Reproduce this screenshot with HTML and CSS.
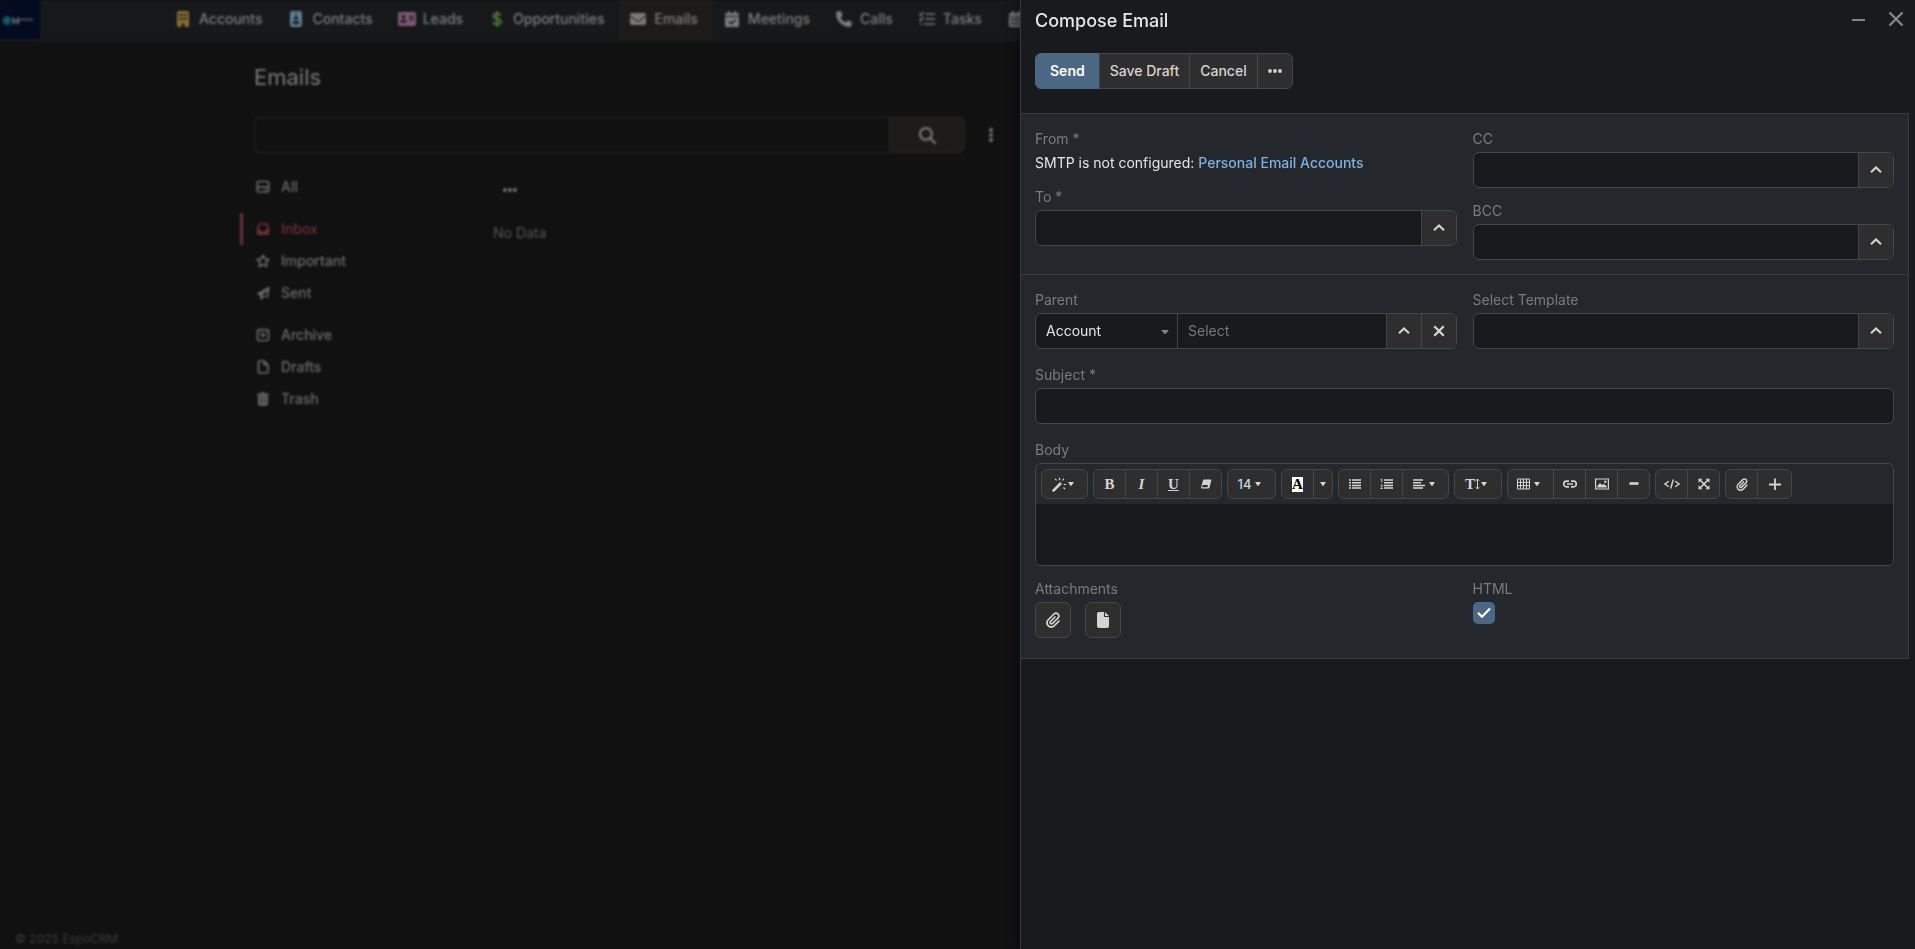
FILE: index.html
```html
<!DOCTYPE html>
<html lang="en">

<head>
  <meta charset="UTF-8" />
  <meta name="viewport" content="width=device-width, initial-scale=1" />
  <title>EspoCRM</title>
  <link rel="stylesheet" href="styles.css">
</head>

<body>

  <!-- Shared icons -->
  <svg class="sprite" aria-hidden="true">
    <symbol id="i-up" viewBox="0 0 14 14"><path d="M2 9.300 7 4.500l5 4.800" fill="none" stroke="currentColor" stroke-width="2.100" /></symbol>
    <symbol id="i-caret" viewBox="0 0 8 4" preserveAspectRatio="none"><path d="M1 0h6q1 0 .4.8L4.600 3.700q-.6.500-1.200 0L.6.800Q0 0 1 0z" /></symbol>
    <symbol id="i-dots" viewBox="0 0 14 4"><circle cx="2" cy="2" r="1.900" /><circle cx="7" cy="2" r="1.900" /><circle cx="12" cy="2" r="1.900" /></symbol>
    <symbol id="i-clip" viewBox="0 0 448 512"><path d="M364.200 83.800c-24.400-24.400-64-24.400-88.400 0l-184 184c-42.100 42.100-42.100 110.300 0 152.400s110.300 42.100 152.400 0l152-152c10.900-10.900 28.700-10.900 39.600 0s10.900 28.700 0 39.600l-152 152c-64 64-167.600 64-231.600 0s-64-167.600 0-231.600l184-184c46.300-46.300 121.300-46.300 167.600 0s46.300 121.300 0 167.600l-176 176c-28.600 28.600-75 28.600-103.600 0s-28.600-75 0-103.600l144-144c10.900-10.900 28.700-10.900 39.600 0s10.900 28.700 0 39.600l-144 144c-6.700 6.700-6.700 17.700 0 24.400s17.700 6.700 24.400 0l176-176c24.400-24.400 24.400-64 0-88.400z" /></symbol>
  </svg>

  <div class="page">
    <header class="navbar">
      <a class="logo" href="#" aria-label="Home">
        <svg width="40" height="39" viewBox="0 0 40 39">
          <circle cx="7" cy="20.500" r="4.500" fill="#10485c" />
          <path d="M3 20.500h8M7 16.500v8" stroke="#165c70" stroke-width="1.500" />
          <path d="M13.500 17.500v7M18 17.500v7M13.500 21h4.500" stroke="#71787f" stroke-width="1.700" />
          <path d="M19 19.500h14" stroke="#3c4250" stroke-width="2.500" />
        </svg>
      </a>
      <nav class="tabs">
        <a href="#"><span class="icon gold"><svg width="12" height="16" viewBox="0 0 12 16"><path fill-rule="evenodd" d="M1.500 0h9A1.500 1.500 0 0 1 12 1.500v13a1.500 1.500 0 0 1-1.500 1.500H7.500v-2.500a1.500 1.500 0 0 0-3 0V16h-3A1.500 1.500 0 0 1 0 14.500v-13A1.500 1.500 0 0 1 1.500 0zM2 3v2h2V3zM5 3v2h2V3zM8 3v2h2V3zM2 7v2h2V7zM5 7v2h2V7zM8 7v2h2V7z" /></svg></span>Accounts</a>
        <a href="#"><span class="icon blue"><svg width="12" height="16" viewBox="0 0 12 16"><path fill-rule="evenodd" d="M2 0h8a2 2 0 0 1 2 2v12a2 2 0 0 1-2 2H2a2 2 0 0 1-2-2V2a2 2 0 0 1 2-2zM4.500 2v1h3V2zM6 5a2 2 0 1 0 0 4 2 2 0 0 0 0-4zM5 10a2.500 2.500 0 0 0-2.500 2.500V13h7v-.5A2.500 2.500 0 0 0 7 10z" /></svg></span>Contacts</a>
        <a href="#"><span class="icon pink"><svg width="18" height="14" viewBox="0 0 18 14"><path fill-rule="evenodd" d="M2 0h14a2 2 0 0 1 2 2v10a2 2 0 0 1-2 2H2a2 2 0 0 1-2-2V2a2 2 0 0 1 2-2zM5.500 3a2 2 0 1 0 0 4 2 2 0 0 0 0-4zM4.500 8A2.500 2.500 0 0 0 2 10.500h7A2.500 2.500 0 0 0 6.500 8zM11 3.500v1h5v-1zM11 5.500v1h5v-1zM11 7.500v1h5v-1z" /></svg></span>Leads</a>
        <a href="#"><span class="icon green"><svg width="10" height="16" viewBox="0 0 10 16"><path d="M5 0v16M9 4.500C8 3.200 6.500 2.800 5 2.800c-2 0-3.600.8-3.600 2.400C1.400 9 9 6.700 9 10.500c0 1.800-1.800 2.700-4 2.700-1.800 0-3.200-.6-4.200-1.800" fill="none" stroke="currentColor" stroke-width="1.900" /></svg></span>Opportunities</a>
        <a href="#" class="active"><span class="icon"><svg width="16" height="16" viewBox="0 0 512 512"><path d="M48 64C21.500 64 0 85.500 0 112c0 15.100 7.100 29.300 19.200 38.400L236.800 313.600c11.400 8.500 27 8.500 38.400 0L492.800 150.400c12.100-9.100 19.200-23.300 19.200-38.400c0-26.500-21.500-48-48-48H48zM0 176V384c0 35.300 28.700 64 64 64H448c35.300 0 64-28.700 64-64V176L294.400 339.200c-22.800 17.100-54 17.100-76.800 0L0 176z" /></svg></span>Emails</a>
        <a href="#"><span class="icon"><svg width="14" height="16" viewBox="0 0 14 16"><path fill-rule="evenodd" d="M3 0h2v2h4V0h2v2h1.500A1.500 1.500 0 0 1 14 3.500V5H0V3.500A1.500 1.500 0 0 1 1.500 2H3zM0 6h14v8.500a1.500 1.500 0 0 1-1.500 1.500h-11A1.500 1.500 0 0 1 0 14.500zM9.800 8.300 6.300 11.700 4.300 9.900l-1 1 3 2.800 4.600-4.300z" /></svg></span>Meetings</a>
        <a href="#"><span class="icon"><svg width="16" height="16" viewBox="0 0 512 512"><path d="M164.900 24.600c-7.700-18.600-28-28.500-47.400-23.200l-88 24C12.100 30.200 0 46 0 64C0 311.400 200.600 512 448 512c18 0 33.800-12.100 38.600-29.500l24-88c5.300-19.400-4.600-39.700-23.200-47.400l-96-40c-16.300-6.800-35.200-2.100-46.300 11.600L304.700 368C234.300 334.700 177.300 277.700 144 207.300L193.300 167c13.700-11.200 18.400-30 11.600-46.300l-40-96z" /></svg></span>Calls</a>
        <a href="#"><span class="icon"><svg width="16" height="16" viewBox="0 0 16 16"><path d="M6.500 3H16M6.500 8H16M5 13h11M.5 3l1.300 1.300L4.500 1.300M.5 8l1.300 1.300L4.500 6.300M.8 13h2" fill="none" stroke="currentColor" stroke-width="1.700" /></svg></span>Tasks</a>
        <a href="#" aria-label="Calendar"><span class="icon"><svg width="14" height="16" viewBox="0 0 14 16"><path fill-rule="evenodd" d="M3 0h2v2h4V0h2v2h1.500A1.500 1.500 0 0 1 14 3.500V5H0V3.500A1.500 1.500 0 0 1 1.500 2H3zM0 6h14v8.500a1.500 1.500 0 0 1-1.500 1.500h-11A1.500 1.500 0 0 1 0 14.500zM2 7.500V10h2.500V7.500zM5.800 7.500V10h2.500V7.500zM9.500 7.500V10H12V7.500zM2 11.500V14h2.500v-2.500zM5.800 11.500V14h2.500v-2.500zM9.500 11.500V14H12v-2.500z" /></svg></span></a>
      </nav>
    </header>

    <main class="content">
      <h1>Emails</h1>
      <div class="search-row">
        <div class="search">
          <input type="text" aria-label="Search emails" />
          <button type="button" aria-label="Search"><svg width="17" height="17" viewBox="0 0 512 512"><path d="M416 208c0 45.900-14.900 88.300-40 122.700L502.600 457.400c12.500 12.500 12.500 32.800 0 45.300s-32.800 12.500-45.300 0L330.700 376c-34.400 25.200-76.800 40-122.700 40C93.100 416 0 322.900 0 208S93.100 0 208 0S416 93.100 416 208zM208 352a144 144 0 1 0 0-288 144 144 0 1 0 0 288z" /></svg></button>
        </div>
        <button type="button" class="plain" aria-label="Filters"><svg width="4" height="14" viewBox="0 0 4 14"><circle cx="2" cy="2" r="1.900" /><circle cx="2" cy="7" r="1.900" /><circle cx="2" cy="12" r="1.900" /></svg></button>
      </div>

      <div class="columns">
        <ul class="folders">
          <li><a href="#"><svg width="14" height="14" viewBox="0 0 14 14"><rect x="1.300" y="1.500" width="11.400" height="10.500" rx="1.500" fill="none" stroke="currentColor" stroke-width="1.700" /><path d="M1 7.200h12" stroke="currentColor" stroke-width="1.700" /><path d="M8.500 9h2.500v1.300H8.500z" /></svg>All</a></li>
          <li class="group active"><a href="#"><svg width="14" height="14" viewBox="0 0 14 14"><path fill-rule="evenodd" d="M4 1h6a2 2 0 0 1 1.900 1.400L13.300 7v4a2 2 0 0 1-2 2H2.700a2 2 0 0 1-2-2V7l1.400-4.600A2 2 0 0 1 4 1zM4 2.600 2.500 7.500h2L5.500 9.500h3L9.500 7.500h2L10 2.600z" /></svg>Inbox</a></li>
          <li><a href="#"><svg width="14" height="14" viewBox="0 0 14 14"><path d="M7 1.100l1.800 3.800 4.200.6-3 2.900.8 4.200L7 10.500l-3.800 2.100.8-4.200-3-2.900 4.200-.6z" fill="none" stroke="currentColor" stroke-width="1.600" stroke-linejoin="round" /></svg>Important</a></li>
          <li><a href="#"><svg width="14" height="14" viewBox="0 0 14 14"><path fill-rule="evenodd" d="M13.800.3 11.800 12.200 8 10.700 5.500 13.700 4.300 13.200V9.600L.3 7.800zM10.800 4.300 6 9.200l4.500 1.500z" /></svg>Sent</a></li>
          <li class="group"><a href="#"><svg width="14" height="14" viewBox="0 0 14 14"><rect x="1.500" y="1.500" width="11" height="11" rx="1.500" fill="none" stroke="currentColor" stroke-width="1.700" /><path d="M2 3.500h10M4 6h6L7 9.300z" stroke="currentColor" stroke-width=".6" /></svg>Archive</a></li>
          <li><a href="#"><svg width="14" height="14" viewBox="0 0 14 14"><path d="M4 1h4l4 4v6.500A1.500 1.500 0 0 1 10.500 13H4a1.500 1.500 0 0 1-1.500-1.500v-9A1.500 1.500 0 0 1 4 1z" fill="none" stroke="currentColor" stroke-width="1.700" /><path d="M7.500 1v4.500H12z" /></svg>Drafts</a></li>
          <li><a href="#"><svg width="14" height="14" viewBox="0 0 14 14"><path fill-rule="evenodd" d="M5 .5h4l.6 1H12a1 1 0 0 1 1 1V3.500H1V2.500a1 1 0 0 1 1-1h2.400zM2 4.200h10v7.500a2 2 0 0 1-2 2H4a2 2 0 0 1-2-2zM4.200 6v5.500h.8V6zM6.600 6v5.500h.8V6zM9 6v5.500h.8V6z" /></svg>Trash</a></li>
        </ul>
        <section class="list">
          <button type="button" class="plain" aria-label="Actions"><svg width="14" height="4"><use href="#i-dots" /></svg></button>
          <p>No Data</p>
        </section>
      </div>
    </main>

    <footer>&copy; 2025 EspoCRM</footer>
  </div>

  <!-- Compose drawer -->
  <form class="drawer">
    <div class="drawer-head">
      <h2>Compose Email</h2>
      <div class="window-actions">
        <button type="button" class="plain" aria-label="Minimize"><svg width="16" height="16" viewBox="0 0 16 16"><path d="M1 9h13" stroke="currentColor" stroke-width="2" /></svg></button>
        <button type="button" class="plain" aria-label="Close"><svg width="16" height="16" viewBox="0 0 16 16"><path d="M1.500 1.500l13 13M14.500 1.500l-13 13" stroke="currentColor" stroke-width="2.400" /></svg></button>
      </div>
    </div>

    <div class="btn-group actions">
      <button type="button" class="btn primary">Send</button>
      <button type="button" class="btn">Save Draft</button>
      <button type="button" class="btn">Cancel</button>
      <button type="button" class="btn" aria-label="More"><svg width="14" height="4"><use href="#i-dots" /></svg></button>
    </div>

    <div class="panel">
      <div class="section recipients">
        <div class="column">
          <div class="cell">
            <span class="label">From *</span>
            <p>SMTP is not configured: <a href="#">Personal Email Accounts</a></p>
          </div>
          <div class="cell">
            <label for="to">To *</label>
            <div class="input-group">
              <input type="text" id="to" />
              <button type="button" class="btn square" aria-label="Select To"><svg width="14" height="14"><use href="#i-up" /></svg></button>
            </div>
          </div>
        </div>
        <div class="column">
          <div class="cell">
            <label for="cc">CC</label>
            <div class="input-group">
              <input type="text" id="cc" />
              <button type="button" class="btn square" aria-label="Select CC"><svg width="14" height="14"><use href="#i-up" /></svg></button>
            </div>
          </div>
          <div class="cell">
            <label for="bcc">BCC</label>
            <div class="input-group">
              <input type="text" id="bcc" />
              <button type="button" class="btn square" aria-label="Select BCC"><svg width="14" height="14"><use href="#i-up" /></svg></button>
            </div>
          </div>
        </div>
      </div>

      <div class="section details">
        <div class="cell">
          <label for="parent">Parent</label>
          <div class="input-group">
            <div class="select">
              <select id="parent">
                <option>Account</option>
                <option>Contact</option>
                <option>Lead</option>
                <option>Opportunity</option>
              </select>
              <svg width="8" height="4"><use href="#i-caret" /></svg>
            </div>
            <input type="text" placeholder="Select" aria-label="Parent record" />
            <button type="button" class="btn square" aria-label="Select parent"><svg width="14" height="14"><use href="#i-up" /></svg></button>
            <button type="button" class="btn square" aria-label="Clear parent"><svg width="14" height="14" viewBox="0 0 14 14"><path d="M2.300 2.300l9.400 9.400M11.700 2.300l-9.400 9.400" stroke="currentColor" stroke-width="2.300" /></svg></button>
          </div>
        </div>
        <div class="cell">
          <label for="template">Select Template</label>
          <div class="input-group">
            <input type="text" id="template" />
            <button type="button" class="btn square" aria-label="Choose template"><svg width="14" height="14"><use href="#i-up" /></svg></button>
          </div>
        </div>
        <div class="cell wide">
          <label for="subject">Subject *</label>
          <div class="input-group">
            <input type="text" id="subject" />
          </div>
        </div>
        <div class="cell wide">
          <label for="body">Body</label>
          <div class="editor">
            <div class="toolbar">
              <div class="btn-group">
                <button type="button" class="btn drop" aria-label="Style"><svg width="15" height="15" viewBox="0 0 15 15"><path d="M.8 14.200 9 6" stroke="currentColor" stroke-width="2.600" /><path d="M7.500.8v2.400M3 1.800l1.600 1.600M12 1.800l-1.600 1.600M11.800 7.500h2.400M11.500 10.500l1.500 1.500" stroke="currentColor" stroke-width="1.200" /></svg><svg class="caret" width="6" height="4"><use href="#i-caret" /></svg></button>
              </div>
              <div class="btn-group">
                <button type="button" class="btn glyph" aria-label="Bold">B</button>
                <button type="button" class="btn glyph italic" aria-label="Italic">I</button>
                <button type="button" class="btn glyph underline" aria-label="Underline">U</button>
                <button type="button" class="btn" aria-label="Clear formatting"><svg width="12" height="12" viewBox="0 0 12 12"><path fill-rule="evenodd" d="M4 1.500h6.500q1 0 .8 1L9.500 9.500q-.3 1-1.300 1H2q-1.200 0-.9-1L3 2.300q.2-.8 1-.8zM2.700 7l-.6 2.300h5.300L8 7z" /></svg></button>
              </div>
              <div class="btn-group">
                <button type="button" class="btn drop size">14<svg class="caret gap" width="6" height="4"><use href="#i-caret" /></svg></button>
              </div>
              <div class="btn-group">
                <button type="button" class="btn glyph" aria-label="Recent color"><span class="swatch">A</span></button>
                <button type="button" class="btn more" aria-label="More colors"><svg width="6" height="4"><use href="#i-caret" /></svg></button>
              </div>
              <div class="btn-group">
                <button type="button" class="btn" aria-label="Unordered list"><svg width="12" height="12" viewBox="0 0 12 12"><path d="M0 2h2M0 4.700h2M0 7.400h2M0 10.100h2M3 2h9M3 4.700h9M3 7.400h9M3 10.100h9" stroke="currentColor" stroke-width="1.500" /></svg></button>
                <button type="button" class="btn" aria-label="Ordered list"><svg width="13" height="12" viewBox="0 0 13 12"><path d="M4 2h9M4 4.700h9M4 7.400h9M4 10.100h9" stroke="currentColor" stroke-width="1.500" /><path d="M.5 1.800 1.800 1v3.500M.5 7.200Q2.800 6.200 2.500 8L.7 10.500h2.200" fill="none" stroke="currentColor" stroke-width=".9" /></svg></button>
                <button type="button" class="btn drop" aria-label="Paragraph"><svg width="12" height="12" viewBox="0 0 12 12"><path d="M0 2h10M0 4.700h8M0 7.400h12M0 10.100h10" stroke="currentColor" stroke-width="1.500" /></svg><svg class="caret gap" width="6" height="4"><use href="#i-caret" /></svg></button>
              </div>
              <div class="btn-group">
                <button type="button" class="btn drop height glyph" aria-label="Line height">T<svg width="5" height="12" viewBox="0 0 5 12"><path d="M2.500 1v10M.8 2.800 2.500 1l1.700 1.800M.8 9.200 2.500 11l1.700-1.800" fill="none" stroke="currentColor" stroke-width="1" /></svg><svg class="caret" width="6" height="4"><use href="#i-caret" /></svg></button>
              </div>
              <div class="btn-group">
                <button type="button" class="btn drop" aria-label="Table"><svg width="13" height="12" viewBox="0 0 13 12"><path d="M.5 1h12v10H.5zM.5 4.300h12M.5 7.600h12M3.500 1v10M6.500 1v10M9.500 1v10" fill="none" stroke="currentColor" stroke-width="1" /></svg><svg class="caret gap" width="6" height="4"><use href="#i-caret" /></svg></button>
                <button type="button" class="btn" aria-label="Link"><svg width="14" height="8" viewBox="0 0 14 8"><path d="M6 1.200H3.500a2.800 2.800 0 0 0 0 5.600H6M8 1.200h2.500a2.800 2.800 0 0 1 0 5.600H8M4 4h6" fill="none" stroke="currentColor" stroke-width="1.700" /></svg></button>
                <button type="button" class="btn" aria-label="Picture"><svg width="14" height="12" viewBox="0 0 14 12"><path d="M.6 1h12.800v10H.6z" fill="none" stroke="currentColor" stroke-width="1.200" /><path d="M2.200 9.500V8.200L5 5l2 2 2-1 2.800 2.500v1z" /><circle cx="10.300" cy="3.800" r="1.200" /></svg></button>
                <button type="button" class="btn" aria-label="Horizontal rule"><svg width="10" height="12" viewBox="0 0 10 12"><path d="M.5 5.500h9" stroke="currentColor" stroke-width="2.600" /></svg></button>
              </div>
              <div class="btn-group">
                <button type="button" class="btn" aria-label="Code view"><svg width="16" height="12" viewBox="0 0 16 12"><path d="M4.800 3.200.9 6l3.900 2.800M11.200 3.200 15.100 6l-3.900 2.800M9.300 1.500l-2.600 9" fill="none" stroke="currentColor" stroke-width="1.400" /></svg></button>
                <button type="button" class="btn" aria-label="Full screen"><svg width="12" height="12" viewBox="0 0 12 12"><path d="M2 2l8 8M10 2l-8 8" stroke="currentColor" stroke-width="1.600" /><path d="M.5.800h4l-4 4zM11.500.800v4l-4-4zM.5 11.200v-4l4 4zM11.500 11.200h-4l4-4z" /></svg></button>
              </div>
              <div class="btn-group">
                <button type="button" class="btn" aria-label="Insert attachment"><svg width="12" height="13"><use href="#i-clip" /></svg></button>
                <button type="button" class="btn plus" aria-label="Insert field"><svg width="12" height="12" viewBox="0 0 12 12"><path d="M0 6.500h12M6 .5v12" stroke="currentColor" stroke-width="1.800" /></svg></button>
              </div>
            </div>
            <textarea id="body"></textarea>
          </div>
        </div>
      </div>

      <div class="section extras">
        <div class="cell">
          <span class="label">Attachments</span>
          <div class="attach">
            <button type="button" class="btn square" aria-label="Attach file"><svg width="16" height="16"><use href="#i-clip" /></svg></button>
            <button type="button" class="btn square" aria-label="Attach document"><svg width="16" height="16" viewBox="0 0 384 512"><path d="M0 64C0 28.700 28.700 0 64 0H224V128c0 17.700 14.300 32 32 32H384V448c0 35.300-28.700 64-64 64H64c-35.300 0-64-28.700-64-64V64zm384 64H256V0L384 128z" /></svg></button>
          </div>
        </div>
        <div class="cell">
          <label for="html">HTML</label>
          <div class="check">
            <input type="checkbox" id="html" checked />
            <svg width="14" height="12" viewBox="0 0 14 12"><path d="M1 5.800 5 9.800 13 1.500" fill="none" stroke="#fff" stroke-width="2.200" /></svg>
          </div>
        </div>
      </div>
    </div>
  </form>

</body>

</html>
```
FILE: styles.css
```css
* {
  box-sizing: border-box;
}

body {
  margin: 0;
  background-color: #111;
  color: #e6e6e6;
  font-family: Inter, "Liberation Sans", sans-serif;
  font-size: 14px;
  line-height: 20px;
  overflow: hidden;
}

h1,
h2,
p,
ul {
  margin: 0;
  padding: 0;
}

a {
  color: inherit;
  text-decoration: none;
}

svg {
  display: block;
  fill: currentColor;
  flex: none;
}

input,
select,
textarea,
button {
  font: inherit;
  color: inherit;
}

button {
  cursor: pointer;
}

.sprite {
  position: absolute;
  width: 0;
  height: 0;
}

.plain {
  display: flex;
  padding: 0;
  border: 0;
  background: none;
}

/* Page behind the drawer */
.page {
  display: flex;
  flex-direction: column;
  height: 100vh;
  color: #7b7b7b;
  filter: blur(1px);
}

.navbar {
  display: flex;
  height: 41px;
  background-color: #16181a;
  border-bottom: 1px solid #1e1f21;
}

.logo {
  width: 40px;
  height: 39px;
  background-color: #030b20;
}

.tabs {
  display: flex;
  margin-left: 124px;
  font-weight: 500;
}

.tabs a {
  display: flex;
  align-items: center;
  gap: 6px;
  padding: 0 15px 2px 9px;
}

.tabs .active {
  background-color: #1c1b19;
}

.icon {
  display: flex;
  justify-content: center;
  width: 20px;
}

.gold {
  color: #8c6d2f;
}

.blue {
  color: #5f7d90;
}

.pink {
  color: #7f5873;
}

.green {
  color: #4a7a38;
}

.content {
  flex: 1;
  width: 100%;
  max-width: 1407px;
  margin: 0 auto;
}

.content h1 {
  margin-top: 21px;
  font-size: 22px;
  font-weight: 400;
  line-height: 30px;
}

.search-row {
  display: flex;
  align-items: center;
  gap: 24px;
  margin-top: 25px;
}

.search {
  display: flex;
  width: 711px;
  height: 36px;
}

.search input {
  flex: 1;
  background: none;
  border: 1px solid #262627;
  border-right: 0;
  border-radius: 6px 0 0 6px;
}

.search button {
  display: flex;
  align-items: center;
  justify-content: center;
  width: 76px;
  background-color: #1e1c19;
  border: 1px solid #262627;
  border-radius: 0 6px 6px 0;
}

.columns {
  display: flex;
  margin-top: 18px;
}

.folders {
  width: 239px;
  list-style: none;
  font-weight: 500;
  color: #6c6c6c;
}

.folders li {
  margin-left: -14px;
  border-left: 3px solid transparent;
}

.folders .group {
  margin-top: 10px;
}

.folders .active {
  color: #6e2f39;
  border-color: #6e2f39;
}

.folders a {
  display: flex;
  align-items: center;
  gap: 11px;
  height: 32px;
  padding-left: 13px;
}

.list {
  color: #555;
}

.list .plain {
  margin: 17px 0 0 10px;
  color: #777;
}

.list p {
  margin-top: 31px;
}

footer {
  padding: 0 15px;
  font-size: 12px;
  color: #3c3c3c;
}

/* Drawer */
.drawer {
  position: fixed;
  top: 0;
  right: 0;
  bottom: 0;
  width: 895px;
  max-width: 100%;
  padding-right: 6px;
  background-color: #191a1d;
  border-left: 1px solid #393a3d;
  box-shadow: 0 0 12px rgba(0, 0, 0, 0.5);
}

.drawer-head {
  display: flex;
  justify-content: space-between;
  padding: 11px 5px 0 14px;
}

.drawer-head h2 {
  font-size: 18px;
  font-weight: 500;
  line-height: 20px;
}

.window-actions {
  display: flex;
  gap: 21px;
  color: #858585;
}

.btn-group {
  display: flex;
}

.btn {
  display: flex;
  align-items: center;
  justify-content: center;
  height: 36px;
  padding: 0 10px;
  background-color: #2e2e2e;
  border: 1px solid #454649;
  border-radius: 6px;
  color: #d4d4d4;
  font-weight: 500;
}

.btn-group .btn:not(:first-child) {
  margin-left: -1px;
  border-top-left-radius: 0;
  border-bottom-left-radius: 0;
}

.btn-group .btn:not(:last-child) {
  border-top-right-radius: 0;
  border-bottom-right-radius: 0;
}

.actions {
  margin: 22px 14px 24px;
}

.btn.primary {
  padding: 0 14px;
  background-color: #4b6784;
  border-color: #4b6784;
  color: #fff;
  font-weight: 600;
}

.btn.square {
  width: 36px;
  padding: 0;
}

.panel {
  background-color: #24272b;
  border: 1px solid #3a3b3e;
  border-left: 0;
}

.section {
  display: grid;
  grid-template-columns: repeat(2, minmax(0, 1fr));
  gap: 16px;
  padding: 15px 14px 0;
}

.recipients {
  padding-bottom: 14px;
  border-bottom: 1px solid #3a3b3e;
}

.column {
  display: flex;
  flex-direction: column;
  gap: 13px;
}

.wide {
  grid-column: 1 / -1;
}

.extras {
  padding: 13px 14px 20px;
}

label,
.label {
  display: block;
  width: max-content;
  margin-bottom: 3px;
  color: #7b7b7b;
}

.cell p {
  line-height: 22px;
}

.cell a {
  color: #7fb1e3;
  font-weight: 500;
}

.input-group {
  display: flex;
  height: 36px;
  background-color: #191a1d;
  border: 1px solid #454649;
  border-radius: 6px;
  overflow: hidden;
}

.input-group input {
  flex: 1;
  min-width: 0;
  padding: 0 10px;
  background: none;
  border: 0;
}

.input-group input::placeholder {
  color: #777;
}

.input-group .btn {
  width: 35px;
  height: 100%;
  border-width: 0 0 0 1px;
  border-radius: 0;
}

.select {
  position: relative;
  width: 142px;
  border-right: 1px solid #454649;
}

.select select {
  width: 100%;
  height: 100%;
  padding: 0 10px;
  appearance: none;
  background: none;
  border: 0;
}

.select svg {
  position: absolute;
  top: 16px;
  right: 8px;
  color: #858585;
  pointer-events: none;
}

/* Body editor */
.editor {
  border: 1px solid #454649;
  border-radius: 6px;
  overflow: hidden;
}

.toolbar {
  display: flex;
  flex-wrap: wrap;
  gap: 5px;
  padding: 5px;
}

.toolbar .btn {
  width: 33px;
  height: 30px;
  padding: 0;
}

.toolbar .drop {
  width: 47px;
}

.toolbar .height {
  width: 48px;
}

.toolbar .size {
  width: 49px;
  font-size: 13px;
}

.toolbar .more {
  width: 20px;
}

.toolbar .plus {
  width: 35px;
}

.toolbar .glyph {
  font-family: "Liberation Serif", serif;
  font-size: 15px;
  font-weight: 700;
}

.toolbar .italic {
  font-style: italic;
}

.toolbar .underline {
  text-decoration: underline;
}

.swatch {
  width: 11px;
  background-color: #fff;
  color: #000;
  line-height: 15px;
}

.caret {
  margin: 0 4px 0 1px;
}

.caret.gap {
  margin-left: 4px;
}

.editor textarea {
  display: block;
  width: 100%;
  height: 61px;
  padding: 10px;
  background-color: #191a1d;
  border: 0;
  resize: none;
}

.attach {
  display: flex;
  gap: 14px;
}

.check {
  position: relative;
  width: 22px;
  height: 22px;
}

.check input {
  display: block;
  width: 22px;
  height: 22px;
  margin: 0;
  appearance: none;
  background-color: #4b6784;
  border-radius: 5px;
}

.check svg {
  position: absolute;
  top: 5px;
  left: 4px;
  pointer-events: none;
}
```
